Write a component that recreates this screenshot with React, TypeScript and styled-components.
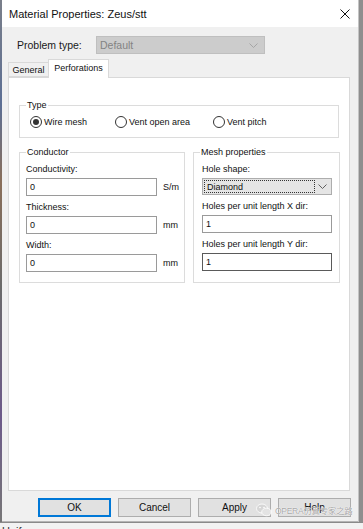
import React from "react";
import styled, { createGlobalStyle } from "styled-components";

const GlobalStyle = createGlobalStyle`
  html, body { margin: 0; padding: 0; }
  body {
    width: 363px;
    height: 529px;
    overflow: hidden;
    background: #9a9a9a;
    font-family: "Liberation Sans", Arial, sans-serif;
    color: #000;
  }
  * { box-sizing: border-box; }
`;

const Screen = styled.div`
  width: 363px;
  height: 529px;
  display: flex;
  flex-direction: column;
`;

const TopArea = styled.div`
  display: flex;
  height: 522px;
`;

const LeftEdge = styled.div`
  width: 2px;
  background: linear-gradient(
    #7a7f8a 0%,
    #5d6f94 20%,
    #8a6f5a 35%,
    #6b6b6b 55%,
    #6d5a8a 80%,
    #777 100%
  );
`;

const RightEdge = styled.div`
  flex: 1;
  background: #8e8e8e;
  border-left: 1px solid #c4c4c4;
`;

const BottomStrip = styled.div`
  height: 7px;
  background: #f2f2f2;
  border-top: 1px solid #8a8a8a;
  overflow: hidden;
  padding-left: 2px;
  font-size: 11px;
  line-height: 17px;
  color: #333;
`;

const Dialog = styled.div`
  width: 356px;
  height: 522px;
  display: flex;
  flex-direction: column;
  background: #f0f0f0;
  position: relative;
  border-bottom: 1px solid #b5b5b5;
`;

const TitleBar = styled.div`
  height: 27px;
  background: #fff;
  display: flex;
  align-items: center;
  justify-content: space-between;
  padding: 0 8px 0 7px;
`;

const Title = styled.span`
  font-size: 11px;
  color: #111;
`;

const ProblemRow = styled.div`
  display: flex;
  align-items: center;
  height: 18px;
  margin-top: 9px;
  padding-left: 15px;
`;

const ProblemLabel = styled.span`
  width: 79px;
  font-size: 10.5px;
  color: #1a1a1a;
`;

const DisabledCombo = styled.div`
  width: 169px;
  height: 18px;
  background: #cccccc;
  border: 1px solid #bfbfbf;
  display: flex;
  align-items: center;
  justify-content: space-between;
  padding: 0 6px 0 3px;
  font-size: 10.5px;
  color: #838383;
`;

const TabStrip = styled.div`
  display: flex;
  align-items: flex-end;
  height: 18px;
  margin-top: 5px;
  padding-left: 6px;
  position: relative;
  z-index: 1;
`;

const Tab = styled.div<{ $active?: boolean }>`
  height: ${(p) => (p.$active ? "19px" : "15px")};
  width: ${(p) => (p.$active ? "61px" : "40px")};
  margin-bottom: ${(p) => (p.$active ? "-1px" : "0")};
  background: ${(p) => (p.$active ? "#fff" : "#f0f0f0")};
  border: 1px solid #d9d9d9;
  border-bottom: ${(p) => (p.$active ? "none" : "1px solid #d9d9d9")};
  border-right: ${(p) => (p.$active ? "1px solid #d9d9d9" : "none")};
  font-size: 9px;
  display: flex;
  align-items: ${(p) => (p.$active ? "flex-start" : "center")};
  padding-top: ${(p) => (p.$active ? "3px" : "0")};
  justify-content: center;
  color: #111;
`;

const TabPage = styled.div`
  margin-left: 6px;
  width: 342px;
  height: 414px;
  background: #fff;
  border: 1px solid #d9d9d9;
  padding: 27px 0 0 10px;
  display: flex;
  flex-direction: column;
`;

const Group = styled.div<{ $w: number; $h: number }>`
  position: relative;
  width: ${(p) => p.$w}px;
  height: ${(p) => p.$h}px;
  border: 1px solid #dcdcdc;
`;

const Legend = styled.span`
  position: absolute;
  top: -6px;
  left: 6px;
  padding: 0 1px;
  background: #fff;
  font-size: 9px;
  line-height: 11px;
  color: #111;
`;

const RadioRow = styled.div`
  display: flex;
  padding: 10px 0 0 10px;
`;

const RadioOption = styled.label<{ $w: number }>`
  width: ${(p) => p.$w}px;
  display: flex;
  align-items: center;
  gap: 2px;
  font-size: 9px;
  color: #111;
`;

const RadioCircle = styled.span<{ $checked?: boolean }>`
  width: 12px;
  height: 12px;
  border-radius: 50%;
  border: 1px solid #333;
  background: #fff;
  display: flex;
  align-items: center;
  justify-content: center;
  &::after {
    content: "";
    width: 6px;
    height: 6px;
    border-radius: 50%;
    background: ${(p) => (p.$checked ? "#333" : "transparent")};
  }
`;

const GroupsRow = styled.div`
  display: flex;
  gap: 8px;
  margin-top: 14px;
`;

const GroupBody = styled.div<{ $pl: number }>`
  display: flex;
  flex-direction: column;
  padding: 10px 0 0 ${(p) => p.$pl}px;
`;

const Field = styled.div`
  display: flex;
  flex-direction: column;
  margin-bottom: 5px;
`;

const FieldLabel = styled.span`
  font-size: 9px;
  line-height: 12px;
  height: 12px;
  color: #111;
  margin-bottom: 3px;
`;

const InputLine = styled.div`
  display: flex;
  align-items: center;
  gap: 6px;
`;

const TextBox = styled.div<{ $w: number; $dark?: boolean }>`
  width: ${(p) => p.$w}px;
  height: 18px;
  border: 1px solid ${(p) => (p.$dark ? "#5a5a5a" : "#9a9a9a")};
  background: #fff;
  font-size: 9px;
  display: flex;
  align-items: center;
  padding-left: 3px;
  color: #111;
`;

const Unit = styled.span`
  font-size: 9px;
  color: #111;
`;

const Combo = styled.div`
  width: 130px;
  height: 17px;
  background: #e5e5e5;
  border: 1px solid #adadad;
  display: flex;
  align-items: center;
  padding: 1px;
`;

const ComboText = styled.div`
  flex: 1;
  height: 100%;
  border: 1px dotted #333;
  font-size: 9px;
  display: flex;
  align-items: center;
  padding-left: 2px;
  color: #111;
`;

const ComboArrow = styled.div`
  width: 15px;
  display: flex;
  justify-content: center;
  align-items: center;
`;

const ButtonRow = styled.div`
  display: flex;
  gap: 7px;
  margin-top: 7px;
  padding-left: 36px;
`;

const Button = styled.div<{ $default?: boolean }>`
  width: 73px;
  height: 19px;
  background: #e1e1e1;
  border: ${(p) => (p.$default ? "2px solid #0078d7" : "1px solid #adadad")};
  display: flex;
  align-items: center;
  justify-content: center;
  font-size: 10px;
  color: #111;
`;

const Watermark = styled.div`
  position: absolute;
  left: 254px;
  top: 503px;
  display: flex;
  align-items: center;
  gap: 3px;
  font-size: 8.5px;
  color: rgba(150, 150, 150, 0.85);
  text-shadow: 0 0 1px #fff, 0 0 1px #fff;
  font-family: "Liberation Sans", "Noto Sans CJK SC", sans-serif;
  letter-spacing: -0.3px;
`;

const Chevron = ({ color }: { color: string }) => (
  <svg width="9" height="5" viewBox="0 0 9 5">
    <path d="M0.5 0.5 L4.5 4.5 L8.5 0.5" fill="none" stroke={color} strokeWidth="1" />
  </svg>
);

const CloseIcon = () => (
  <svg width="10" height="10" viewBox="0 0 10 10">
    <path d="M0.5 0.5 L9.5 9.5 M9.5 0.5 L0.5 9.5" stroke="#111" strokeWidth="1" />
  </svg>
);

const WeChatIcon = () => (
  <svg width="16" height="14" viewBox="0 0 16 14">
    <ellipse cx="6" cy="5.5" rx="5.5" ry="4.5" fill="#d6d6d6" stroke="#fff" strokeWidth="0.8" />
    <ellipse cx="10.5" cy="9" rx="4.8" ry="3.8" fill="#e3e3e3" stroke="#fff" strokeWidth="0.8" />
    <circle cx="4" cy="4.5" r="0.8" fill="#fff" />
    <circle cx="8" cy="4.5" r="0.8" fill="#fff" />
  </svg>
);

export default function App() {
  return (
    <Screen>
      <GlobalStyle />
      <TopArea>
        <LeftEdge />
        <Dialog>
          <TitleBar>
            <Title>Material Properties: Zeus/stt</Title>
            <CloseIcon />
          </TitleBar>
          <ProblemRow>
            <ProblemLabel>Problem type:</ProblemLabel>
            <DisabledCombo>
              <span>Default</span>
              <Chevron color="#a5a5a5" />
            </DisabledCombo>
          </ProblemRow>
          <TabStrip>
            <Tab>General</Tab>
            <Tab $active>Perforations</Tab>
          </TabStrip>
          <TabPage>
            <Group $w={320} $h={33}>
              <Legend>Type</Legend>
              <RadioRow>
                <RadioOption $w={85}>
                  <RadioCircle $checked />
                  Wire mesh
                </RadioOption>
                <RadioOption $w={98}>
                  <RadioCircle />
                  Vent open area
                </RadioOption>
                <RadioOption $w={90}>
                  <RadioCircle />
                  Vent pitch
                </RadioOption>
              </RadioRow>
            </Group>
            <GroupsRow>
              <Group $w={166} $h={131}>
                <Legend>Conductor</Legend>
                <GroupBody $pl={6}>
                  <Field>
                    <FieldLabel>Conductivity:</FieldLabel>
                    <InputLine>
                      <TextBox $w={131}>0</TextBox>
                      <Unit>S/m</Unit>
                    </InputLine>
                  </Field>
                  <Field>
                    <FieldLabel>Thickness:</FieldLabel>
                    <InputLine>
                      <TextBox $w={131}>0</TextBox>
                      <Unit>mm</Unit>
                    </InputLine>
                  </Field>
                  <Field>
                    <FieldLabel>Width:</FieldLabel>
                    <InputLine>
                      <TextBox $w={131}>0</TextBox>
                      <Unit>mm</Unit>
                    </InputLine>
                  </Field>
                </GroupBody>
              </Group>
              <Group $w={147} $h={131}>
                <Legend>Mesh properties</Legend>
                <GroupBody $pl={8}>
                  <Field>
                    <FieldLabel>Hole shape:</FieldLabel>
                    <Combo>
                      <ComboText>Diamond</ComboText>
                      <ComboArrow>
                        <Chevron color="#606060" />
                      </ComboArrow>
                    </Combo>
                  </Field>
                  <Field>
                    <FieldLabel>Holes per unit length X dir:</FieldLabel>
                    <TextBox $w={130}>1</TextBox>
                  </Field>
                  <Field>
                    <FieldLabel>Holes per unit length Y dir:</FieldLabel>
                    <TextBox $w={130} $dark>1</TextBox>
                  </Field>
                </GroupBody>
              </Group>
            </GroupsRow>
          </TabPage>
          <ButtonRow>
            <Button $default>OK</Button>
            <Button>Cancel</Button>
            <Button>Apply</Button>
            <Button>Help</Button>
          </ButtonRow>
          <Watermark>
            <WeChatIcon />
            <span>OPERA仿真专家之路</span>
          </Watermark>
        </Dialog>
        <RightEdge />
      </TopArea>
      <BottomStrip>Uniform</BottomStrip>
    </Screen>
  );
}
